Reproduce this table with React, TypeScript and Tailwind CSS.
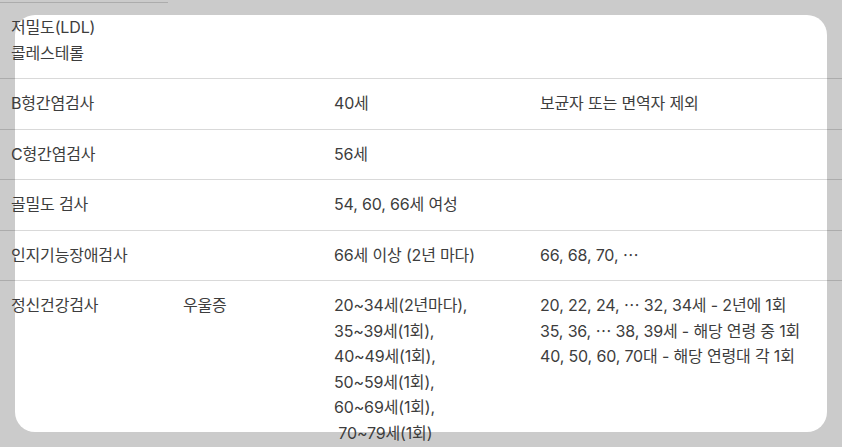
const rows: { name: string[]; sub?: string; age: string[]; note: string[] }[] = [
  { name: ["저밀도(LDL)", "콜레스테롤"], age: [], note: [] },
  { name: ["B형간염검사"], age: ["40세"], note: ["보균자 또는 면역자 제외"] },
  { name: ["C형간염검사"], age: ["56세"], note: [] },
  { name: ["골밀도 검사"], age: ["54, 60, 66세 여성"], note: [] },
  { name: ["인지기능장애검사"], age: ["66세 이상 (2년 마다)"], note: ["66, 68, 70, ⋯"] },
  {
    name: ["정신건강검사"],
    sub: "우울증",
    age: [
      "20~34세(2년마다),",
      "35~39세(1회),",
      "40~49세(1회),",
      "50~59세(1회),",
      "60~69세(1회),",
      "\u00a070~79세(1회)",
    ],
    note: [
      "20, 22, 24, ⋯ 32, 34세 - 2년에 1회",
      "35, 36, ⋯ 38, 39세 - 해당 연령 중 1회",
      "40, 50, 60, 70대 - 해당 연령대 각 1회",
    ],
  },
];

function Lines({ items }: { items: string[] }) {
  return (
    <>
      {items.map((t, i) => (
        <div key={i} className="whitespace-pre">
          {t}
        </div>
      ))}
    </>
  );
}

export default function App() {
  return (
    <div
      className="relative h-[447px] w-full overflow-hidden bg-[#cbcbcb] text-[16px] leading-[25.5px] tracking-[-0.01em] text-[#3d3d3d]"
      style={{ fontFamily: '"Inter", "Noto Sans CJK KR", sans-serif' }}
    >
      {/* card behind the table */}
      <div className="absolute left-[15px] top-[15px] h-[417px] w-[812px] rounded-[20px] bg-white" />

      <div className="relative pt-[2px]">
        <div className="h-px w-[168px] bg-black/15" />
        {rows.map((row, i) => (
          <div
            key={i}
            className="grid grid-cols-[172px_151px_206px_1fr] border-b border-black/15 py-3"
          >
            <div className="pl-[11px]">
              <Lines items={row.name} />
            </div>
            <div className="pl-[11px]">{row.sub}</div>
            <div className="pl-[11px]">
              <Lines items={row.age} />
            </div>
            <div className="pl-[11px]">
              <Lines items={row.note} />
            </div>
          </div>
        ))}
      </div>
    </div>
  );
}
